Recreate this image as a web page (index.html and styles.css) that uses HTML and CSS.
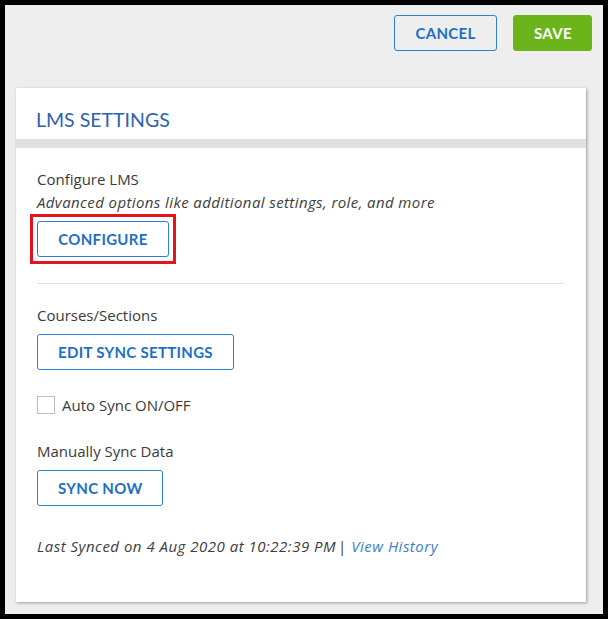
FILE: index.html
```html
<!DOCTYPE html>
<html>
<head>
<meta charset="utf-8">
<link rel="stylesheet" href="styles.css">
</head>
<body>
<div class="frame">
  <div class="toolbar">
    <button class="btn btn-outline btn-top">CANCEL</button>
    <button class="btn btn-save btn-top">SAVE</button>
  </div>
  <div class="card">
    <div class="card-header">LMS SETTINGS</div>
    <div class="card-bar"></div>
    <div class="card-body">
      <div class="section">
        <div class="label">Configure LMS</div>
        <div class="hint">Advanced options like additional settings, role, and more</div>
        <div class="highlight"><button class="btn btn-outline btn-field">CONFIGURE</button></div>
      </div>
      <div class="divider"></div>
      <div class="section">
        <div class="label">Courses/Sections</div>
        <button class="btn btn-outline btn-field">EDIT SYNC SETTINGS</button>
        <label class="check-row"><span class="checkbox"></span><span>Auto Sync ON/OFF</span></label>
      </div>
      <div class="section">
        <div class="label label-gap">Manually Sync Data</div>
        <button class="btn btn-outline btn-field">SYNC NOW</button>
        <div class="synced">Last Synced on 4 Aug 2020 at 10:22:39 PM<span class="pipe">|</span> <a class="link">View History</a></div>
      </div>
    </div>
  </div>
</div>
</body>
</html>
```

FILE: styles.css
```css
html, body {
  margin: 0;
  padding: 0;
  background: #000;
}
body {
  font-family: "Open Sans", Lato, sans-serif;
  color: #3a3a3a;
  font-size: 15px;
}
.frame {
  margin: 5px;
  height: 609px;
  background: #eeeeee;
  box-sizing: border-box;
  padding: 10px 11px 0 11px;
  display: flex;
  flex-direction: column;
}
.toolbar {
  display: flex;
  justify-content: flex-end;
  gap: 16px;
}
.btn {
  font-family: Lato, "Open Sans", sans-serif;
  font-weight: 700;
  font-size: 15px;
  border-radius: 3px;
  cursor: pointer;
  padding: 0 20px;
  letter-spacing: 0.3px;
}
.btn-top {
  height: 36px;
}
.btn-outline {
  background: #fff;
  border: 1px solid #2b80d6;
  color: #1d6fc4;
}
.toolbar .btn-outline {
  background: transparent;
  width: 103px;
}
.btn-save {
  background: #6cb41b;
  border: 1px solid #6cb41b;
  color: #fff;
  width: 79px;
}
.card {
  margin-top: 37px;
  width: 570px;
  background: #fff;
  box-shadow: 1px 1px 3px rgba(0, 0, 0, 0.35);
}
.card-header {
  height: 51px;
  box-sizing: border-box;
  padding: 20px 0 0 20px;
  font-family: Lato, "Open Sans", sans-serif;
  font-size: 19.5px;
  color: #2d62ad;
  line-height: 24px;
}
.card-bar {
  height: 9px;
  background: #e0e0e0;
}
.card-body {
  padding: 20px 21px 44px 21px;
}
.label, .hint, .synced {
  line-height: 23px;
}
.hint {
  font-style: italic;
  color: #3d3d3d;
  letter-spacing: 0.4px;
}
.btn-field {
  display: block;
  height: 36px;
  margin-top: 7px;
}
.highlight {
  display: block;
  width: fit-content;
  border: 3px solid #e4141e;
  padding: 4px;
  margin-left: -7px;
}
.highlight .btn-field {
  margin-top: 0;
  width: 132px;
}
.divider {
  height: 1px;
  background: #e2e2e2;
  margin: 19px 0 20px 0;
}
.check-row {
  display: flex;
  align-items: center;
  gap: 7px;
  margin-top: 26px;
  height: 18px;
}
.checkbox {
  width: 16px;
  height: 16px;
  border: 1px solid #bdbdbd;
  background: #fff;
}
.label-gap {
  margin-top: 26px;
}
.synced {
  margin-top: 29px;
  font-style: italic;
  color: #3d3d3d;
  letter-spacing: 0.5px;
}
.pipe {
  font-style: normal;
  margin-left: 2px;
}
.link {
  color: #3a7fc9;
}
```
